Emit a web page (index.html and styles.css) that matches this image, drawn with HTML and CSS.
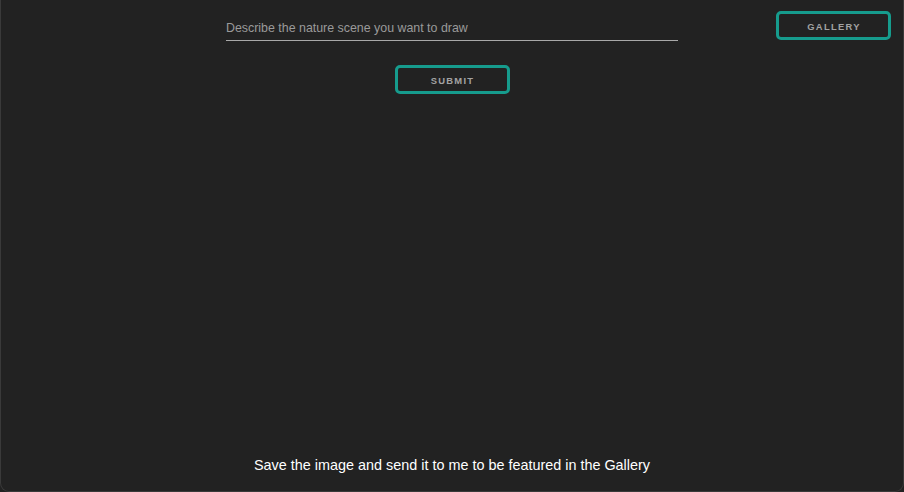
FILE: index.html
```html
<!DOCTYPE html>
<html lang="en">
<head>
<meta charset="utf-8">
<title>Nature Scene</title>
<link rel="stylesheet" href="styles.css">
</head>
<body>
<div class="window">
  <button class="btn gallery-btn" type="button">GALLERY</button>
  <form class="prompt-form">
    <input class="prompt-input" type="text" placeholder="Describe the nature scene you want to draw">
    <button class="btn submit-btn" type="button">SUBMIT</button>
  </form>
  <p class="footer-note">Save the image and send it to me to be featured in the Gallery</p>
</div>
</body>
</html>
```

FILE: styles.css
```css
html, body {
  margin: 0;
  padding: 0;
  height: 100%;
  background: #222222;
}

body {
  font-family: "Liberation Sans", Arial, sans-serif;
}

.window {
  position: relative;
  box-sizing: border-box;
  height: 492px;
  display: flex;
  flex-direction: column;
  align-items: center;
  background: #222222;
  border-left: 1px solid #3a3a3a;
  border-right: 1px solid #3a3a3a;
  border-bottom: 1px solid #3a3a3a;
  border-radius: 0 0 9px 9px;
}

.prompt-form {
  display: flex;
  flex-direction: column;
  align-items: center;
  padding-top: 17px;
}

.prompt-input {
  box-sizing: border-box;
  width: 452px;
  height: 24px;
  padding: 0 0 2px 0;
  border: none;
  border-bottom: 1px solid #a9a9a9;
  background: transparent;
  color: #dddddd;
  font-family: "Liberation Sans", Arial, sans-serif;
  font-size: 12.4px;
  outline: none;
}

.prompt-input::placeholder {
  color: #9a9a9a;
}

.btn {
  box-sizing: border-box;
  height: 29px;
  border: 3px solid #169c8d;
  border-radius: 5px;
  background: #222222;
  color: #a3a3a3;
  font-family: "Liberation Sans", Arial, sans-serif;
  font-weight: bold;
  font-size: 9.4px;
  letter-spacing: 1.3px;
  padding: 2px 0 0 1px;
  cursor: pointer;
}

.submit-btn {
  width: 115px;
  margin-top: 24px;
}

.gallery-btn {
  position: absolute;
  top: 11px;
  right: 12px;
  width: 115px;
}

.footer-note {
  margin: auto 0 0 0;
  padding-bottom: 17px;
  color: #ffffff;
  font-size: 14.4px;
  line-height: 18px;
}
```
